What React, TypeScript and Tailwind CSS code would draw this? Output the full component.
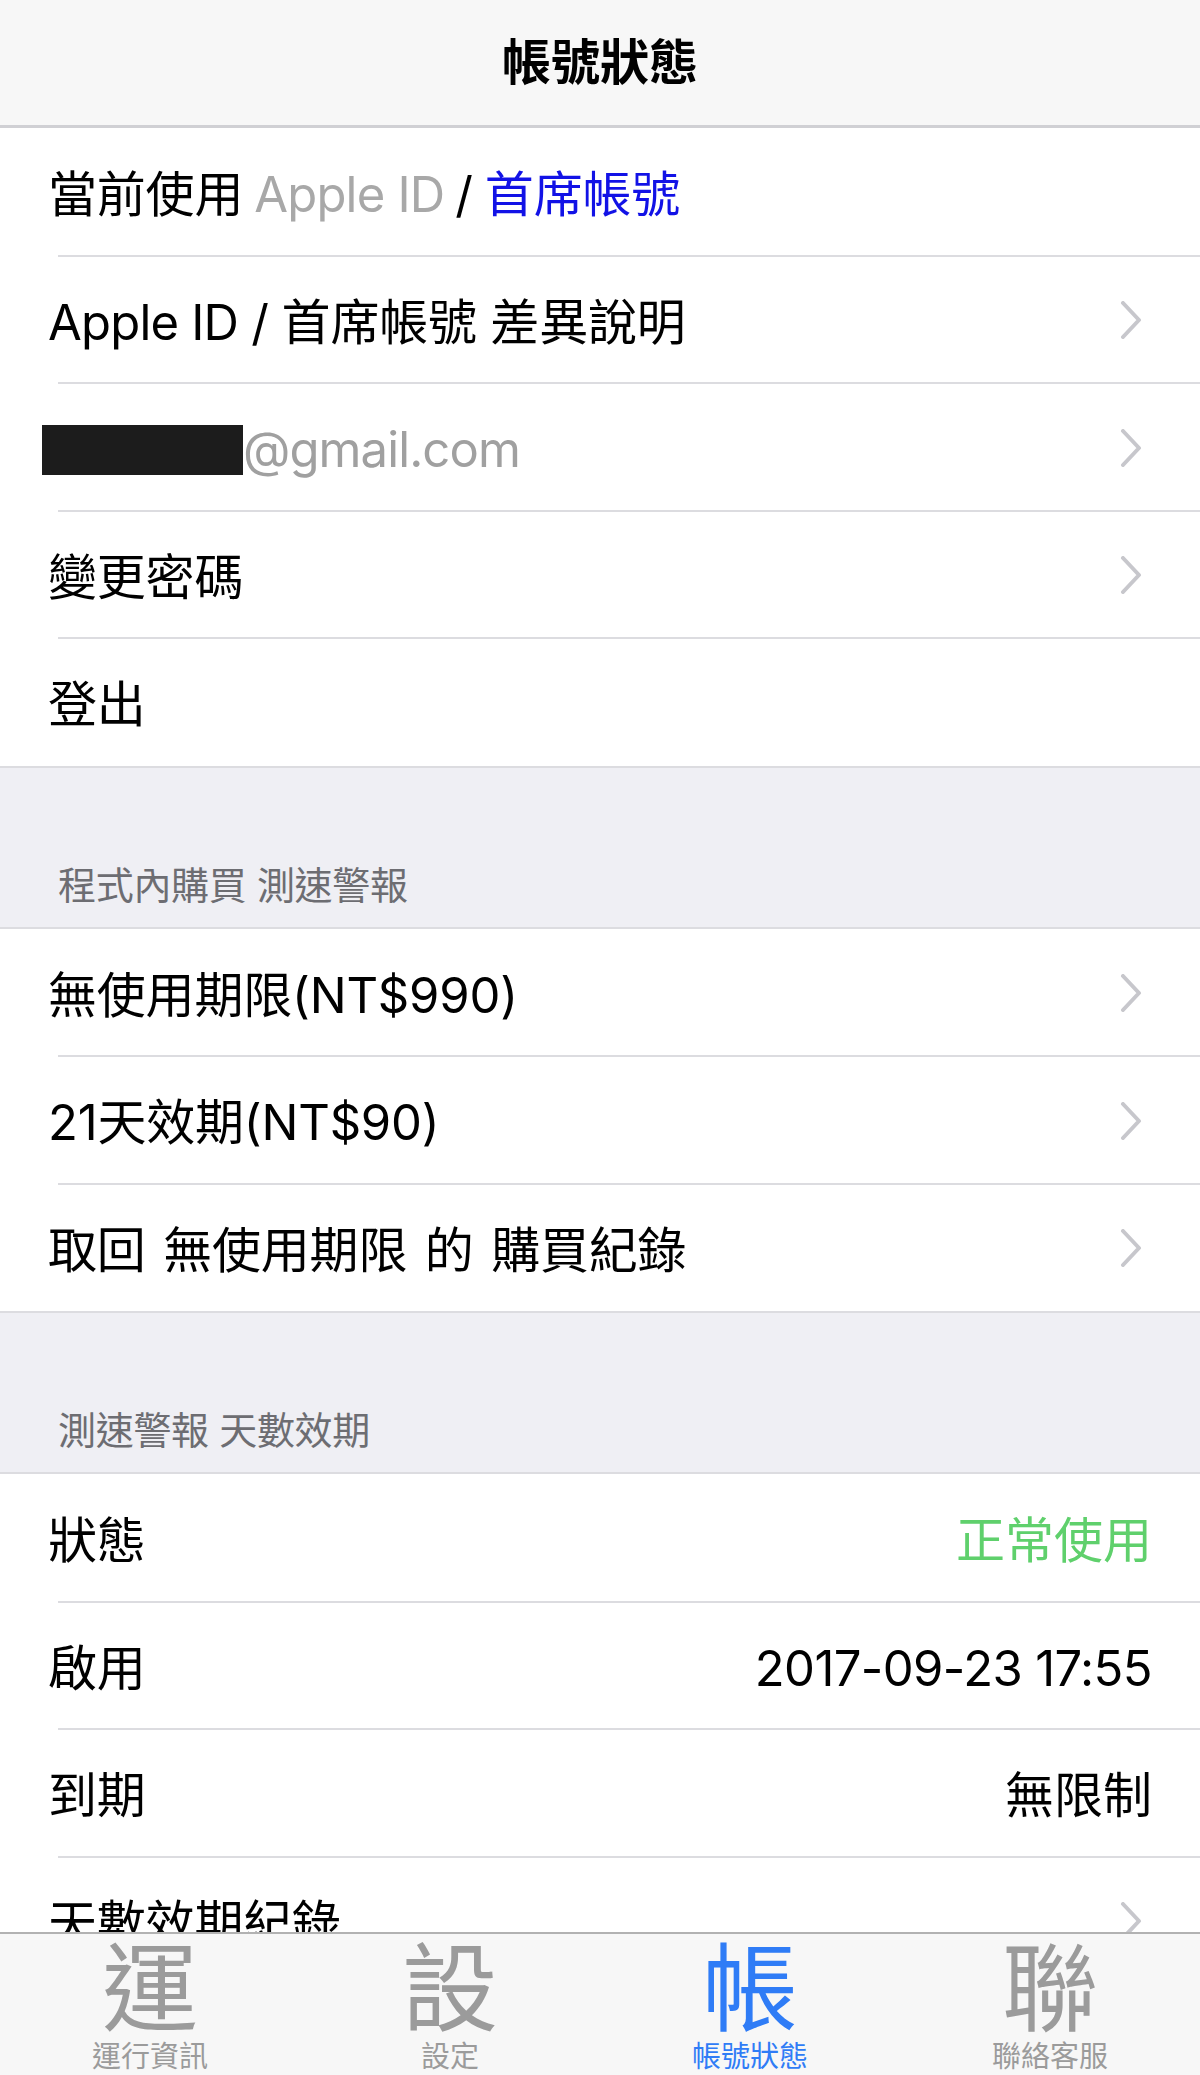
import React from 'react';

const font = { fontFamily: "Inter, 'Noto Sans CJK TC', sans-serif" };

type Row = {
  label: React.ReactNode;
  value?: React.ReactNode;
  chevron?: boolean;
};

const Chevron: React.FC = () => (
  <svg width="22" height="38" viewBox="0 0 22 38" className="shrink-0">
    <path d="M3 2 L19 19 L3 36" fill="none" stroke="#c7c7cc" strokeWidth="4" strokeLinecap="round" strokeLinejoin="round" />
  </svg>
);

const Group: React.FC<{ rows: Row[] }> = ({ rows }) => (
  <div className="bg-white">
    {rows.map((row, i) => (
      <div key={i} className="relative h-[127.5px] flex items-center justify-between pl-[48px] pr-[48px] pt-[6px]">
        <div className="text-[49px] leading-none text-black whitespace-nowrap flex items-center tracking-[-0.2px]">{row.label}</div>
        {row.value}
        {row.chevron && <div className="mr-[10px] mt-[-4px]"><Chevron /></div>}
        {i < rows.length - 1 && (
          <div className="absolute bottom-[-1px] left-[58px] right-0 h-[2px] bg-[#dcdce0]" />
        )}
      </div>
    ))}
  </div>
);

const Header: React.FC<{ title: string }> = ({ title }) => (
  <div className="h-[163px] border-y-2 border-[#dcdce0] flex items-end pl-[58px] pb-[23px]">
    <span className="text-[38px] leading-none text-[#6d6d72] tracking-[-0.3px]">{title}</span>
  </div>
);

const tabs = [
  { big: '運', label: '運行資訊' },
  { big: '設', label: '設定' },
  { big: '帳', label: '帳號狀態', active: true },
  { big: '聯', label: '聯絡客服' },
];

export default function App() {
  const account: Row[] = [
    {
      label: (
        <>
          當前使用 <span className="text-[#a8a8a8] mx-[11px] tracking-[-0.8px]">Apple ID</span>/<span className="text-[#1212e6] ml-[12px]">首席帳號</span>
        </>
      ),
    },
    {
      label: (
        <>
          <span className="tracking-[-0.8px]">Apple ID /</span>&nbsp;首席帳號 差異說明
        </>
      ),
      chevron: true,
    },
    {
      label: (
        <>
          <span className="inline-block w-[201px] h-[50px] bg-[#1c1c1c] ml-[-6px]" />
          <span className="text-[#a0a0a0] tracking-[-0.9px]">@gmail.com</span>
        </>
      ),
      chevron: true,
    },
    { label: '變更密碼', chevron: true },
    { label: '登出' },
  ];

  const purchase: Row[] = [
    { label: '無使用期限(NT$990)', chevron: true },
    { label: '21天效期(NT$90)', chevron: true },
    { label: <span className="[word-spacing:4px]">取回 無使用期限 的 購買紀錄</span>, chevron: true },
  ];

  const status: Row[] = [
    { label: '狀態', value: <span className="text-[49px] leading-none text-[#5fd06c]">正常使用</span> },
    { label: '啟用', value: <span className="text-[49px] leading-none text-black tracking-[-0.6px]">2017-09-23 17:55</span> },
    { label: '到期', value: <span className="text-[49px] leading-none text-black">無限制</span> },
    { label: '天數效期紀錄', chevron: true },
  ];

  return (
    <div className="w-[1200px] h-[2075px] overflow-hidden bg-[#efeff4] flex flex-col" style={font}>
      <div className="h-[128px] shrink-0 bg-[#f7f7f7] border-b-[3px] border-[#d0d0d4] flex items-center justify-center">
        <span className="text-[49px] font-semibold text-black leading-none">帳號狀態</span>
      </div>

      <div className="flex-1 overflow-hidden">
        <Group rows={account} />
        <Header title="程式內購買 測速警報" />
        <Group rows={purchase} />
        <Header title="測速警報 天數效期" />
        <Group rows={status} />
      </div>

      <div className="h-[143px] shrink-0 bg-[#f7f7f7] border-t-2 border-[#b2b2b2] grid grid-cols-4">
        {tabs.map((t) => (
          <div
            key={t.big}
            className={`flex flex-col items-center pt-[6px] ${t.active ? 'text-[#2f7cf6]' : 'text-[#9b9b9b]'}`}
          >
            <span className="text-[96px] leading-[96px]">{t.big}</span>
            <span className="text-[29px] leading-[29px] mt-[6px]">{t.label}</span>
          </div>
        ))}
      </div>
    </div>
  );
}
